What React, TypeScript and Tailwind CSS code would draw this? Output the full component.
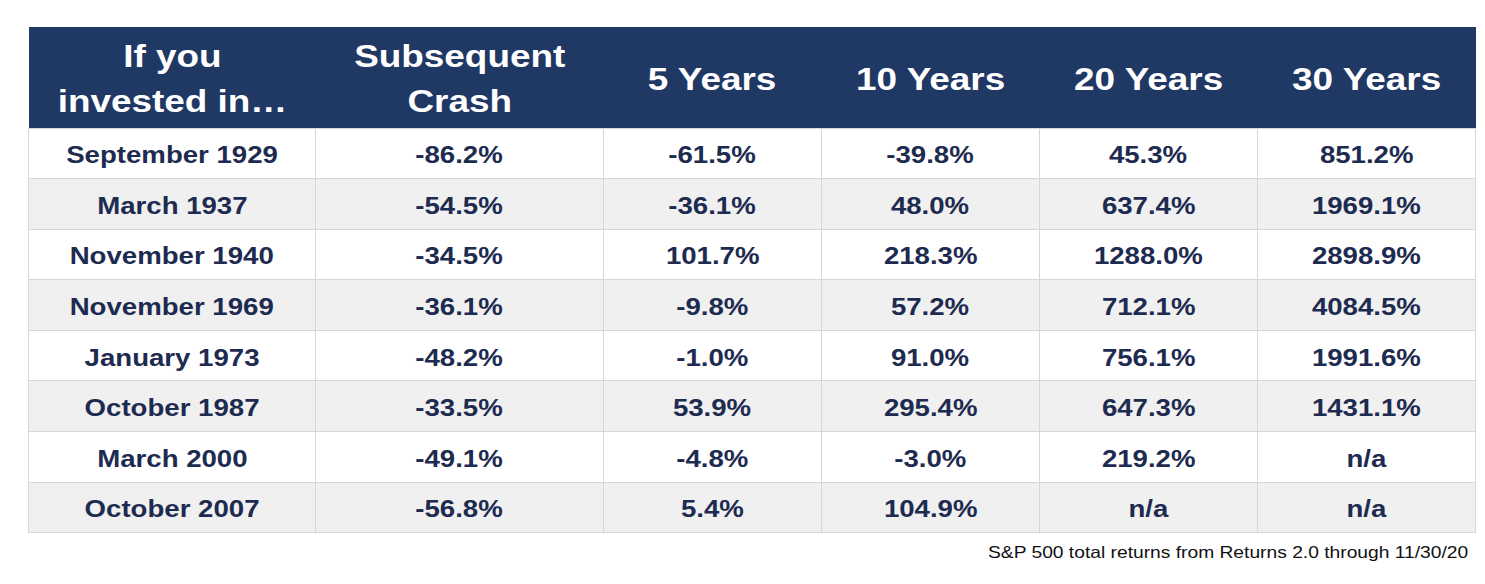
const headers = ["If you invested in…", "Subsequent Crash", "5 Years", "10 Years", "20 Years", "30 Years"];

const rows = [
  ["September 1929", "-86.2%", "-61.5%", "-39.8%", "45.3%", "851.2%"],
  ["March 1937", "-54.5%", "-36.1%", "48.0%", "637.4%", "1969.1%"],
  ["November 1940", "-34.5%", "101.7%", "218.3%", "1288.0%", "2898.9%"],
  ["November 1969", "-36.1%", "-9.8%", "57.2%", "712.1%", "4084.5%"],
  ["January 1973", "-48.2%", "-1.0%", "91.0%", "756.1%", "1991.6%"],
  ["October 1987", "-33.5%", "53.9%", "295.4%", "647.3%", "1431.1%"],
  ["March 2000", "-49.1%", "-4.8%", "-3.0%", "219.2%", "n/a"],
  ["October 2007", "-56.8%", "5.4%", "104.9%", "n/a", "n/a"],
];

const widths = ["w-[287px]", "w-[288px]", "w-[218px]", "w-[218px]", "w-[218px]", "w-[218px]"];

export default function App() {
  return (
    <div className="w-[1485px] h-[584px] bg-white pl-[28px] pt-[27px] font-['Liberation_Sans',Arial,sans-serif]">
      <table className="w-[1447px] border-collapse table-fixed">
        <thead>
          <tr className="bg-[#203864] h-[101px]">
            {headers.map((h, i) => (
              <th key={i} className={`${widths[i]} text-white font-bold text-[31px] leading-[45px] text-center p-0 pt-[4px]`}>
                <span className="inline-block scale-x-[1.19] px-6">
                  {i === 0 ? (
                    <>If you<br />invested in…</>
                  ) : i === 1 ? (
                    <>Subsequent<br />Crash</>
                  ) : (
                    h
                  )}
                </span>
              </th>
            ))}
          </tr>
        </thead>
        <tbody>
          {rows.map((r, ri) => (
            <tr key={ri} className={ri % 2 === 1 ? "bg-[#f0f0f0]" : "bg-white"}>
              {r.map((c, ci) => (
                <td
                  key={ci}
                  className="h-[50.6px] border border-[#d6d6d6] text-center text-[#1e2b50] font-bold text-[24px] leading-none p-0 pt-[4px]"
                >
                  <span className="inline-block scale-x-[1.15]">{c}</span>
                </td>
              ))}
            </tr>
          ))}
        </tbody>
      </table>
      <div className="w-[1440px] text-right text-[#111] text-[16.5px] leading-none mt-[11px]">
        <span className="inline-block scale-x-[1.165] origin-right">S&amp;P 500 total returns from Returns 2.0 through 11/30/20</span>
      </div>
    </div>
  );
}
